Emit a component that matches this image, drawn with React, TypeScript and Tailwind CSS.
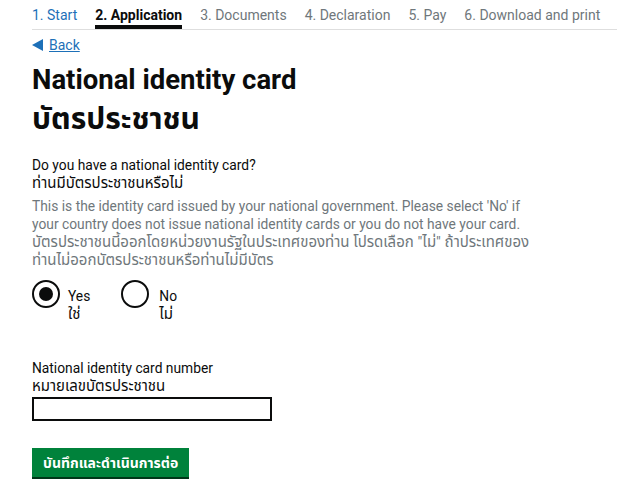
import React from "react";

const font = { fontFamily: "Roboto, 'Noto Sans', 'Noto Sans Thai', sans-serif" };

function Th({ children }: { children: React.ReactNode }) {
  return <div className="text-[15px] leading-[18px]">{children}</div>;
}

export default function App() {
  const steps = [
    { t: "1. Start", cls: "text-[#1d70b8]" },
    { t: "2. Application", cls: "text-[#0b0c0c] font-bold", active: true },
    { t: "3. Documents", cls: "text-[#6f777b]" },
    { t: "4. Declaration", cls: "text-[#6f777b]" },
    { t: "5. Pay", cls: "text-[#6f777b]" },
    { t: "6. Download and print", cls: "text-[#6f777b]" },
  ];
  return (
    <div className="min-h-[494px] w-[617px] bg-white text-[#0b0c0c]" style={font}>
      <div className="ml-[32px] flex h-[30px] border-b border-[#dedede]">
        {steps.map((s, i) => (
          <div
            key={i}
            className={`mr-[18px] h-[29px] whitespace-nowrap pt-[7px] text-[14px] leading-[16px] ${s.cls} ${s.active ? "border-b-[4px] border-[#0b0c0c]" : ""}`}
          >
            {s.t}
          </div>
        ))}
      </div>
      <div className="px-[32px]">
        <div className="mt-[6px] flex items-center text-[14px] leading-[18px] text-[#1d70b8]">
          <svg width="12" height="12" viewBox="0 0 12 12" className="mr-[5px]">
            <polygon points="0,6 11,0 11,12" fill="#1d70b8" />
          </svg>
          <span className="underline">Back</span>
        </div>
        <h1 className="mt-[10px] text-[27.5px] font-bold leading-[32px]">National identity card</h1>
        <h1 className="mt-[5px] text-[30px] font-bold leading-[36px]">บัตรประชาชน</h1>
        <div className="mt-[19px] text-[13.8px] leading-[18px]">
          <div>Do you have a national identity card?</div>
          <Th>ท่านมีบัตรประชาชนหรือไม่</Th>
        </div>
        <div className="mt-[5px] whitespace-nowrap text-[13.8px] leading-[18px] text-[#6f777b]">
          <div>This is the identity card issued by your national government. Please select 'No' if</div>
          <div>your country does not issue national identity cards or you do not have your card.</div>
          <Th>บัตรประชาชนนี้ออกโดยหน่วยงานรัฐในประเทศของท่าน โปรดเลือก "ไม่" ถ้าประเทศของ</Th>
          <Th>ท่านไม่ออกบัตรประชาชนหรือท่านไม่มีบัตร</Th>
        </div>
        <div className="mt-[11px] flex">
          <div className="flex">
            <div className="flex h-[28px] w-[28px] items-center justify-center rounded-full border-2 border-[#0b0c0c]">
              <div className="h-[14px] w-[14px] rounded-full bg-[#0b0c0c]" />
            </div>
            <div className="ml-[8px] mt-[7px] text-[13.8px] leading-[18px]">
              <div>Yes</div>
              <Th>ใช่</Th>
            </div>
          </div>
          <div className="ml-[31px] flex">
            <div className="h-[28px] w-[28px] rounded-full border-2 border-[#0b0c0c]" />
            <div className="ml-[10px] mt-[7px] text-[13.8px] leading-[18px]">
              <div>No</div>
              <Th>ไม่</Th>
            </div>
          </div>
        </div>
        <div className="mt-[36px] text-[13.8px] leading-[18px]">
          <div>National identity card number</div>
          <Th>หมายเลขบัตรประชาชน</Th>
        </div>
        <div className="mt-[2px] h-[24px] w-[240px] border-2 border-[#0b0c0c]" />
        <button className="mt-[27px] h-[29px] bg-[#00823b] px-[11px] text-[14px] font-bold leading-[18px] text-white shadow-[0_2px_0_#003618]">
          บันทึกและดำเนินการต่อ
        </button>
      </div>
    </div>
  );
}
